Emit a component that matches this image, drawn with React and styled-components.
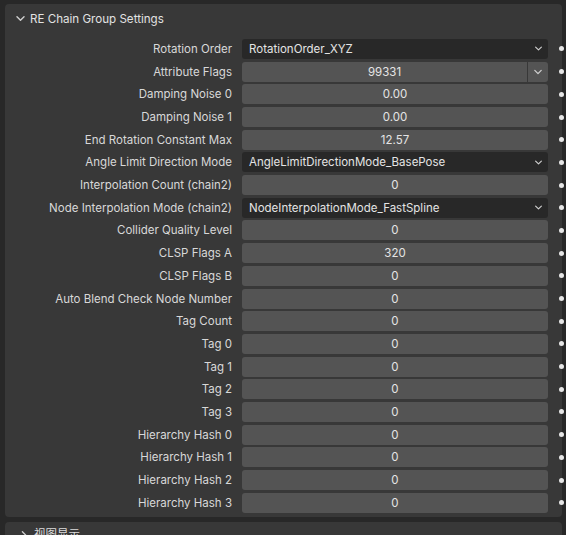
import React from "react";
import styled, { createGlobalStyle } from "styled-components";

const Global = createGlobalStyle`
  html, body { margin: 0; padding: 0; background: #282828; }
  body {
    width: 566px; height: 535px; overflow: hidden;
    font-family: Inter, "Noto Sans", "Noto Sans CJK SC", sans-serif;
    font-size: 11.5px; color: #dcdcdc;
  }
`;

const Page = styled.div`
  padding: 4px 4px 0 5px;
  display: flex;
  flex-direction: column;
  gap: 5px;
`;

const Panel = styled.section`
  background: #383838;
  border-radius: 4px;
  padding-bottom: 3px;
`;

const Header = styled.div`
  height: 29px;
  display: flex;
  align-items: center;
  gap: 4px;
  padding-left: 10px;
  color: #e2e2e2;
  font-size: 11.6px;
`;

const Body = styled.div`
  display: grid;
  grid-template-columns: 227px 306px 15px;
  column-gap: 10px;
  grid-auto-rows: 22.7px;
  align-items: center;
  padding-top: 4.6px;
`;

const Label = styled.div`
  text-align: right;
  color: #d8d8d8;
  white-space: nowrap;
  font-size: 11.5px;
`;

const FieldBase = styled.div`
  height: 20px;
  border-radius: 3px;
  box-sizing: border-box;
  display: flex;
  align-items: center;
  font-size: 11.5px;
  color: #e4e4e4;
`;

const NumField = styled(FieldBase)`
  background: #545454;
  justify-content: center;
`;

const Menu = styled(FieldBase)`
  background: #282828;
  justify-content: space-between;
  padding: 0 5px 0 7px;
`;

const Split = styled.div`
  display: flex;
  gap: 1px;
  height: 20px;
`;

const SplitNum = styled(NumField)`
  flex: 1;
  border-radius: 3px 0 0 3px;
`;

const SplitBtn = styled(FieldBase)`
  width: 20px;
  background: #545454;
  border-radius: 0 3px 3px 0;
  justify-content: center;
`;

const DotCell = styled.div`
  display: flex;
  justify-content: flex-start;
  padding-left: 1px;
`;

const Dot = styled.span`
  width: 5px;
  height: 5px;
  border-radius: 50%;
  background: #e6e6e6;
`;

const SubHeader = styled.div`
  background: #383838;
  border-radius: 4px 4px 0 0;
  height: 18px;
  display: flex;
  align-items: flex-end;
  gap: 5px;
  padding-left: 14px;
  font-family: "Noto Sans CJK SC", sans-serif;
  font-size: 11.5px;
  line-height: 14px;
  color: #dcdcdc;
  overflow: hidden;
`;

const Chevron = ({ dir = "down", size = 10, color = "#cfcfcf" }) => (
  <svg width={size} height={size} viewBox="0 0 10 10">
    <path
      d={dir === "down" ? "M1.8 3.4 L5 6.6 L8.2 3.4" : "M3.4 1.8 L6.6 5 L3.4 8.2"}
      fill="none"
      stroke={color}
      strokeWidth="1.3"
      strokeLinecap="round"
      strokeLinejoin="round"
    />
  </svg>
);

const rows = [
  ["Rotation Order", "menu", "RotationOrder_XYZ"],
  ["Attribute Flags", "split", "99331"],
  ["Damping Noise 0", "num", "0.00"],
  ["Damping Noise 1", "num", "0.00"],
  ["End Rotation Constant Max", "num", "12.57"],
  ["Angle Limit Direction Mode", "menu", "AngleLimitDirectionMode_BasePose"],
  ["Interpolation Count (chain2)", "num", "0"],
  ["Node Interpolation Mode (chain2)", "menu", "NodeInterpolationMode_FastSpline"],
  ["Collider Quality Level", "num", "0"],
  ["CLSP Flags A", "num", "320"],
  ["CLSP Flags B", "num", "0"],
  ["Auto Blend Check Node Number", "num", "0"],
  ["Tag Count", "num", "0"],
  ["Tag 0", "num", "0"],
  ["Tag 1", "num", "0"],
  ["Tag 2", "num", "0"],
  ["Tag 3", "num", "0"],
  ["Hierarchy Hash 0", "num", "0"],
  ["Hierarchy Hash 1", "num", "0"],
  ["Hierarchy Hash 2", "num", "0"],
  ["Hierarchy Hash 3", "num", "0"],
];

function Field({ kind, value }) {
  if (kind === "menu")
    return (
      <Menu>
        <span>{value}</span>
        <Chevron size={9} />
      </Menu>
    );
  if (kind === "split")
    return (
      <Split>
        <SplitNum>{value}</SplitNum>
        <SplitBtn>
          <Chevron size={10} />
        </SplitBtn>
      </Split>
    );
  return <NumField>{value}</NumField>;
}

export default function App() {
  return (
    <>
      <Global />
      <Page>
        <Panel>
          <Header>
            <Chevron size={11} />
            <span>RE Chain Group Settings</span>
          </Header>
          <Body>
            {rows.map(([label, kind, value]) => (
              <React.Fragment key={label}>
                <Label>{label}</Label>
                <Field kind={kind} value={value} />
                <DotCell>
                  <Dot />
                </DotCell>
              </React.Fragment>
            ))}
          </Body>
        </Panel>
        <SubHeader>
          <Chevron dir="right" size={10} />
          <span>视图显示</span>
        </SubHeader>
      </Page>
    </>
  );
}
